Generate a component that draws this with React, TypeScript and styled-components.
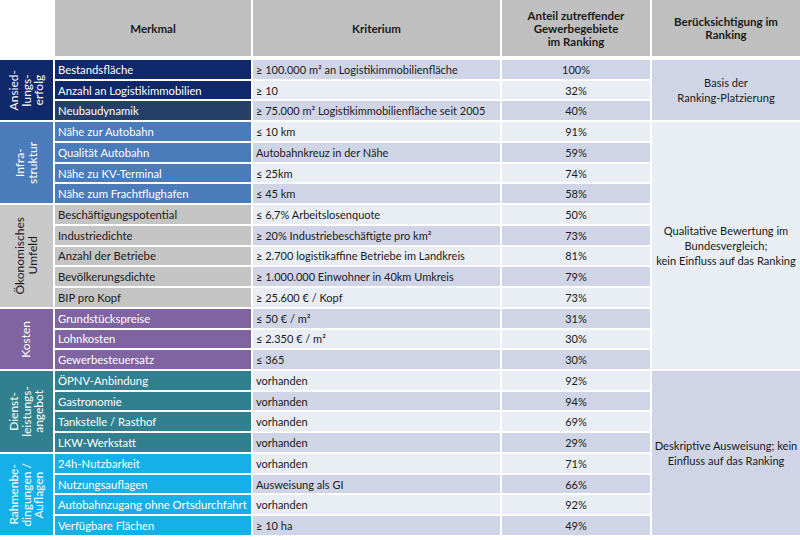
import React from "react";
import styled, { createGlobalStyle } from "styled-components";

const Global = createGlobalStyle`
  html, body { margin: 0; padding: 0; background: #ffffff; }
  body { font-family: "Lato", "Open Sans", sans-serif; }
`;

const COLS = "53px 196px 247px 148px 148px";

const Page = styled.div`
  width: 800px;
  height: 540px;
  overflow: hidden;
  background: #fff;
`;

const Header = styled.div`
  display: grid;
  grid-template-columns: ${COLS};
  column-gap: 2px;
  height: 56px;
`;

const HeadCell = styled.div<{ $empty?: boolean }>`
  background: ${(p) => (p.$empty ? "transparent" : "#bfbfbf")};
  color: #1a1a1a;
  font-weight: 700;
  font-size: 11.5px;
  line-height: 13px;
  display: flex;
  align-items: center;
  justify-content: center;
  text-align: center;
  white-space: pre-line;
`;

const Body = styled.div`
  margin-top: 4px;
  display: grid;
  grid-template-columns: ${COLS};
  grid-template-rows: repeat(23, 18.74px);
  column-gap: 2px;
  row-gap: 2px;
`;

const GroupCell = styled.div<{ $bg: string; $fg: string; $start: number; $span: number }>`
  grid-column: 1;
  grid-row: ${(p) => p.$start} / span ${(p) => p.$span};
  background: ${(p) => p.$bg};
  color: ${(p) => p.$fg};
  display: flex;
  align-items: center;
  justify-content: center;
`;

const VerticalLabel = styled.span`
  writing-mode: vertical-rl;
  transform: rotate(180deg);
  text-align: center;
  white-space: pre;
  font-size: 12px;
  line-height: 12.5px;
`;

const FeatureCell = styled.div<{ $bg: string; $fg: string; $row: number }>`
  grid-column: 2;
  grid-row: ${(p) => p.$row};
  background: ${(p) => p.$bg};
  color: ${(p) => p.$fg};
  font-size: 11.3px;
  display: flex;
  align-items: center;
  padding-left: 3px;
  white-space: nowrap;
`;

const CriterionCell = styled.div<{ $dark: boolean; $row: number }>`
  grid-column: 3;
  grid-row: ${(p) => p.$row};
  background: ${(p) => (p.$dark ? "#cfd5e7" : "#e9edf4")};
  color: #1a1a1a;
  font-size: 11px;
  display: flex;
  align-items: center;
  padding-left: 3px;
  white-space: nowrap;
`;

const ShareCell = styled.div<{ $dark: boolean; $row: number }>`
  grid-column: 4;
  grid-row: ${(p) => p.$row};
  background: ${(p) => (p.$dark ? "#cfd5e7" : "#e9edf4")};
  color: #1a1a1a;
  font-size: 11px;
  display: flex;
  align-items: center;
  justify-content: center;
`;

const RankCell = styled.div<{ $dark: boolean; $start: number; $span: number }>`
  grid-column: 5;
  grid-row: ${(p) => p.$start} / span ${(p) => p.$span};
  background: ${(p) => (p.$dark ? "#cfd5e7" : "#e9edf4")};
  color: #1a1a1a;
  font-size: 11.1px;
  line-height: 15px;
  display: flex;
  align-items: center;
  justify-content: center;
  text-align: center;
  white-space: pre;
`;

type Row = { m: string; k: string; a: string; bg?: string };
type Group = { label: string; fg: string; bg: string; cellBg: string; rows: Row[] };

const groups: Group[] = [
  {
    label: "Ansied-\nlungs-\nerfolg",
    bg: "#10296a",
    fg: "#ffffff",
    cellBg: "#0f2869",
    rows: [
      { m: "Bestandsfläche", k: "≥ 100.000 m² an Logistikimmobilienfläche", a: "100%" },
      { m: "Anzahl an Logistikimmobilien", k: "≥ 10", a: "32%" },
      { m: "Neubaudynamik", k: "≥ 75.000 m² Logistikimmobilienfläche seit 2005", a: "40%", bg: "#253f68" },
    ],
  },
  {
    label: "Infra-\nstruktur",
    bg: "#4a7bba",
    fg: "#ffffff",
    cellBg: "#4a7bba",
    rows: [
      { m: "Nähe zur Autobahn", k: "≤ 10 km", a: "91%" },
      { m: "Qualität Autobahn", k: "Autobahnkreuz in der Nähe", a: "59%" },
      { m: "Nähe zu KV-Terminal", k: "≤ 25km", a: "74%" },
      { m: "Nähe zum Frachtflughafen", k: "≤ 45 km", a: "58%" },
    ],
  },
  {
    label: "Ökonomisches\nUmfeld",
    bg: "#c8c8c8",
    fg: "#1a1a1a",
    cellBg: "#c4c4c4",
    rows: [
      { m: "Beschäftigungspotential", k: "≤ 6,7% Arbeitslosenquote", a: "50%" },
      { m: "Industriedichte", k: "≥ 20% Industriebeschäftigte pro km²", a: "73%" },
      { m: "Anzahl der Betriebe", k: "≥ 2.700 logistikaffine Betriebe im Landkreis", a: "81%" },
      { m: "Bevölkerungsdichte", k: "≥ 1.000.000 Einwohner in 40km Umkreis", a: "79%" },
      { m: "BIP pro Kopf", k: "≥ 25.600 € / Kopf", a: "73%" },
    ],
  },
  {
    label: "Kosten",
    bg: "#8064a2",
    fg: "#ffffff",
    cellBg: "#8064a2",
    rows: [
      { m: "Grundstückspreise", k: "≤ 50 € / m²", a: "31%" },
      { m: "Lohnkosten", k: "≤ 2.350 € / m²", a: "30%" },
      { m: "Gewerbesteuersatz", k: "≤ 365", a: "30%" },
    ],
  },
  {
    label: "Dienst-\nleistungs-\nangebot",
    bg: "#31808f",
    fg: "#ffffff",
    cellBg: "#31808f",
    rows: [
      { m: "ÖPNV-Anbindung", k: "vorhanden", a: "92%" },
      { m: "Gastronomie", k: "vorhanden", a: "94%" },
      { m: "Tankstelle / Rasthof", k: "vorhanden", a: "69%" },
      { m: "LKW-Werkstatt", k: "vorhanden", a: "29%" },
    ],
  },
  {
    label: "Rahmenbe-\ndingungen /\nAuflagen",
    bg: "#16b0e8",
    fg: "#ffffff",
    cellBg: "#16b0e8",
    rows: [
      { m: "24h-Nutzbarkeit", k: "vorhanden", a: "71%" },
      { m: "Nutzungsauflagen", k: "Ausweisung als GI", a: "66%" },
      { m: "Autobahnzugang ohne Ortsdurchfahrt", k: "vorhanden", a: "92%" },
      { m: "Verfügbare Flächen", k: "≥ 10 ha", a: "49%" },
    ],
  },
];

const rankings = [
  { text: "Basis der\nRanking-Platzierung", start: 1, span: 3, dark: true },
  { text: "Qualitative Bewertung im\nBundesvergleich;\nkein Einfluss auf das Ranking", start: 4, span: 12, dark: false },
  { text: "Deskriptive Ausweisung; kein\nEinfluss auf das Ranking", start: 16, span: 8, dark: true },
];

export default function App() {
  let row = 1;
  const cells: React.ReactNode[] = [];
  groups.forEach((g, gi) => {
    const start = row;
    cells.push(
      <GroupCell key={`g${gi}`} $bg={g.bg} $fg={g.fg} $start={start} $span={g.rows.length}>
        <VerticalLabel>{g.label}</VerticalLabel>
      </GroupCell>
    );
    g.rows.forEach((r, ri) => {
      const dark = row % 2 === 1;
      cells.push(
        <FeatureCell key={`m${gi}-${ri}`} $bg={r.bg ?? g.cellBg} $fg={g.fg} $row={row}>
          {r.m}
        </FeatureCell>,
        <CriterionCell key={`k${gi}-${ri}`} $dark={dark} $row={row}>
          {r.k}
        </CriterionCell>,
        <ShareCell key={`a${gi}-${ri}`} $dark={dark} $row={row}>
          {r.a}
        </ShareCell>
      );
      row++;
    });
  });

  return (
    <Page>
      <Global />
      <Header>
        <HeadCell $empty />
        <HeadCell>Merkmal</HeadCell>
        <HeadCell>Kriterium</HeadCell>
        <HeadCell>{"Anteil zutreffender\nGewerbegebiete\nim Ranking"}</HeadCell>
        <HeadCell>{"Berücksichtigung im\nRanking"}</HeadCell>
      </Header>
      <Body>
        {cells}
        {rankings.map((r, i) => (
          <RankCell key={`r${i}`} $dark={r.dark} $start={r.start} $span={r.span}>
            {r.text}
          </RankCell>
        ))}
      </Body>
    </Page>
  );
}
